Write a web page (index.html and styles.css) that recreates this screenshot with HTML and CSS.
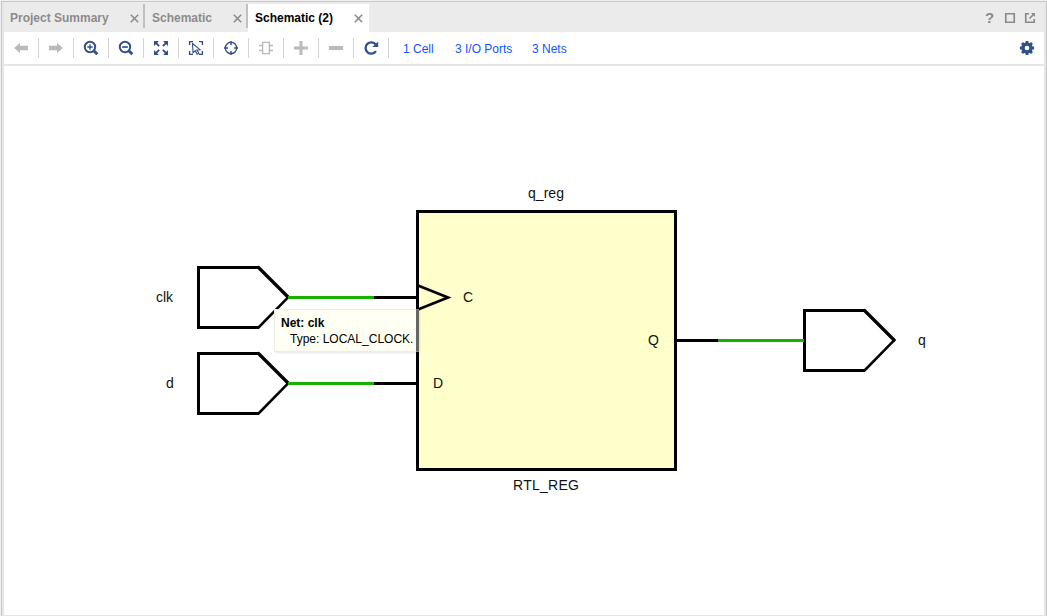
FILE: index.html
```html
<!DOCTYPE html>
<html lang="en">
<head>
<meta charset="utf-8">
<title>Schematic (2)</title>
<link rel="stylesheet" href="styles.css">
</head>
<body>
<div class="panel">
  <header class="tabs">
    <div class="tab first"><span class="label">Project Summary</span><svg class="close" viewBox="0 0 9 9"><path d="M.8.8l7.4 7.4M8.2.8L.8 8.2"/></svg></div>
    <div class="tab second"><span class="label">Schematic</span><svg class="close" viewBox="0 0 9 9"><path d="M.8.8l7.4 7.4M8.2.8L.8 8.2"/></svg></div>
    <div class="tab active"><span class="label">Schematic (2)</span><svg class="close" viewBox="0 0 9 9"><path d="M.8.8l7.4 7.4M8.2.8L.8 8.2"/></svg></div>
    <div class="window-tools">
      <span class="help">?</span>
      <svg class="wt" viewBox="0 0 12 12"><path d="M1.750 1.750h8.500v8.500h-8.500z"/></svg>
      <svg class="wt" viewBox="0 0 12 12"><path d="M5 1.750H1.750v8.500h8.500V7M5.500 6.500L9.500 2.500"/><path class="solid" d="M7 1h4v4z"/></svg>
    </div>
  </header>
  <nav class="toolbar">
    <button class="tool off"><svg viewBox="0 0 16 16"><path class="solid" d="M1 8l6-5v2.800h8v4.400H7V13z"/></svg></button>
    <button class="tool off"><svg viewBox="0 0 16 16"><path class="solid" d="M15 8L9 3v2.800H1v4.400h8V13z"/></svg></button>
    <button class="tool"><svg viewBox="0 0 16 16"><circle cx="7" cy="7" r="5.200" stroke-width="2"/><path d="M7 4.300v5.400M4.300 7h5.400" stroke-width="1.400"/><path d="M10.800 10.800l3.500 3.500" stroke-width="3"/></svg></button>
    <button class="tool"><svg viewBox="0 0 16 16"><circle cx="7" cy="7" r="5.200" stroke-width="2"/><path d="M4.200 7h5.600" stroke-width="1.700"/><path d="M10.800 10.800l3.500 3.500" stroke-width="3"/></svg></button>
    <button class="tool"><svg viewBox="0 0 16 16"><path class="solid" d="M1 1h5L1 6zM15 1h-5l5 5zM1 15h5l-5-5zM15 15h-5l5-5z"/><path d="M2 2l4.200 4.200M14 2L9.800 6.200M2 14l4.200-4.200M14 14l-4.200-4.200" stroke-width="1.800"/></svg></button>
    <button class="tool"><svg viewBox="0 0 16 16"><path d="M1.600 5V1.600H5M11 1.600h3.400V5M1.600 11v3.400H5M11 14.400h3.400V11" stroke-width="1.400"/><path d="M4.500 3.500l7.500 6.200-3.300.2 2.200 3.400-1.700 1-2-3.600-2.200 2z" stroke-width="1.100"/></svg></button>
    <button class="tool"><svg viewBox="0 0 16 16"><circle cx="8" cy="8" r="5.700" stroke-width="1.400"/><path d="M8 1v4M8 11v4M1 8h4M11 8h4" stroke-width="1.500"/></svg></button>
    <button class="tool off"><svg viewBox="0 0 16 16"><path d="M4.600 2.400h6.800v11.200H4.600zM1 5.500h3.500M1 10.500h3.500M11.500 5.500H15M11.500 10.500H15" stroke-width="1.400"/></svg></button>
    <button class="tool off"><svg viewBox="0 0 16 16"><path d="M8 1v14M1 8h14" stroke-width="3"/></svg></button>
    <button class="tool off"><svg viewBox="0 0 16 16"><path d="M1 8h14" stroke-width="4"/></svg></button>
    <button class="tool"><svg viewBox="0 0 16 16"><path d="M12.800 4.500A5.700 5.700 0 1 0 13 11.200" stroke-width="2.300"/><path class="solid" d="M15.200 1.500V7H9.300z"/></svg></button>
    <a class="link cell">1 Cell</a>
    <a class="link ports">3 I/O Ports</a>
    <a class="link nets">3 Nets</a>
    <svg class="gear" viewBox="0 0 16 16"><circle cx="8" cy="8" r="4" stroke-width="3.300"/><path d="M8 .9v2.500M8 12.600v2.500M.9 8h2.500M12.600 8h2.500M3 3l1.700 1.700M11.300 11.300L13 13M13 3l-1.700 1.700M4.700 11.300L3 13" stroke-width="2.800"/></svg>
  </nav>
  <main class="canvas">
    <svg class="schematic" viewBox="4 66 1040 549">
      <rect class="cell-body" x="417.500" y="211.500" width="258" height="258"/>
      <g class="wire">
        <path d="M374 297.500h43M374 383.500h43M676 340.500h42"/>
        <path d="M418 285.500L448 297.500L418 309.500" stroke-width="2.700"/>
        <path d="M259 267.500H198.500V327.500H259M259 353.500H198.500V413.500H259M865 310.500H804.500V370.500H865"/>
      </g>
      <path class="slope upper" d="M258.500 267.500l29.500 29.500M258.500 353.500l29.500 29.500M864.500 310.500l29.500 29.500"/>
      <path class="slope lower" d="M258.500 327.500l29.800-30.300M258.500 413.500l29.800-30.300M864.500 370.500l29.800-30.300"/>
      <g class="net"><path d="M288 297.500h86M288 383.500h86M718 340.500h86"/></g>
      <g class="names">
        <text x="156" y="302">clk</text>
        <text x="166" y="388">d</text>
        <text x="463" y="302">C</text>
        <text x="433" y="388">D</text>
        <text x="648" y="345">Q</text>
        <text x="918" y="345">q</text>
        <text x="528" y="198" textLength="36">q_reg</text>
        <text x="513" y="490" textLength="66">RTL_REG</text>
      </g>
    </svg>
    <aside class="tooltip"><b>Net: clk</b><span>Type: LOCAL_CLOCK.</span></aside>
  </main>
</div>
</body>
</html>
```
FILE: styles.css
```css
* { box-sizing: border-box; }
body { margin: 0; background: #f0f0f0; font: 12px "Liberation Sans", Arial, sans-serif; }
.panel {
  height: 615px; margin: 1px 0 0 1px; display: flex; flex-direction: column;
  border: 1px solid #c8c8c8; border-bottom: 0; background: #e6e6e6;
  padding: 0 2px 1px;
}
.tabs { display: flex; flex: none; height: 30px; padding-top: 2px; background: #ebebeb; color: #8b8b8b; font-weight: bold; }
.tab { position: relative; display: flex; align-items: center; justify-content: space-between; height: 28px; }
.first { width: 141px; padding: 0 6px; }
.second { width: 103px; padding: 0 6px 0 7px; }
.first::after, .second::after { content: ""; position: absolute; right: 0; top: 0; width: 2px; height: 24px; background: #c0c0c0; }
.active { width: 121px; padding: 0 6px 0 7px; background: #fff; color: #000; }
.close { width: 9px; height: 9px; fill: none; stroke: #888; stroke-width: 1.5; }
.window-tools { display: flex; align-items: center; gap: 8px; margin-left: auto; padding-right: 8px; }
.help { width: 11px; padding-bottom: 1px; font-size: 15px; }
.wt { width: 12px; height: 12px; fill: none; stroke: #8b8b8b; stroke-width: 1.7; }
.solid { fill: currentColor; stroke: none; }
.toolbar { display: flex; flex: none; align-items: center; height: 32px; background: #fff; }
.tool { width: 35px; height: 20px; padding: 0 8px 0 9px; border: 0; border-right: 1px solid #d4d4d4; background: none; color: #34508a; }
.tool svg { display: block; width: 16px; height: 16px; fill: none; stroke: currentColor; stroke-width: 1.8; }
.tool.off { color: #bababa; }
.link { padding-top: 1px; color: #1155ff; white-space: nowrap; }
.cell { margin-left: 14px; width: 52px; }
.ports { width: 77px; }
.gear { width: 16px; height: 16px; margin-left: auto; margin-right: 9px; fill: none; stroke: #2e5089; }
.canvas { position: relative; flex: none; height: 549px; margin-top: 2px; background: #fff; }
.schematic { display: block; width: 1040px; height: 549px; }
.cell-body { fill: #ffffcc; stroke: #000; stroke-width: 3; }
.net { fill: none; stroke: #19b000; stroke-width: 3; }
.wire { fill: none; stroke: #000; stroke-width: 3; }
.slope { fill: none; stroke: #000; stroke-linecap: square; }
.upper { stroke-width: 3.2; stroke-linecap: round; }
.lower { stroke-width: 2.5; stroke-linecap: round; }
.names { font-size: 14px; fill: #111; }
.tooltip {
  position: absolute; left: 270px; top: 243px; width: 145px; height: 43px; padding: 5px 0 0 6px;
  border: 1px solid rgba(200, 200, 200, .35); border-right: 0;
  background: linear-gradient(90deg, #fffff3 142px, rgba(255, 255, 240, .4) 142px) border-box;
  box-shadow: 1px 1px 2px rgba(0, 0, 0, .1); line-height: 16px; white-space: nowrap;
}
.tooltip b, .tooltip span { display: block; }
.tooltip span { padding-left: 9px; }
```
